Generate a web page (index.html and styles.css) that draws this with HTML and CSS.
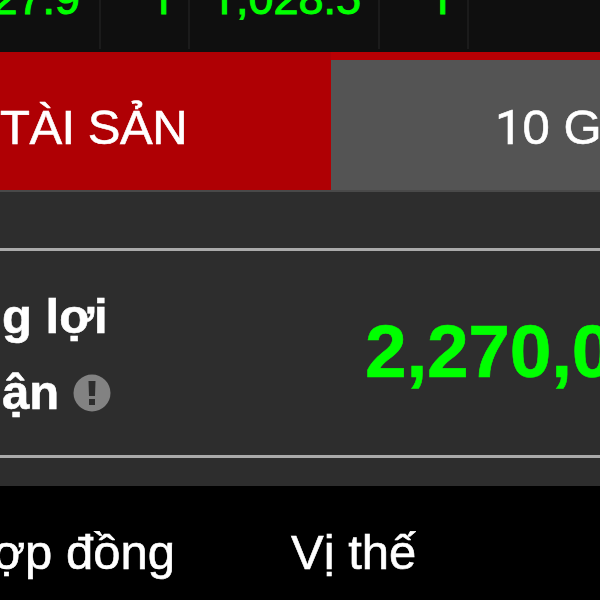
FILE: index.html
```html
<!DOCTYPE html>
<html lang="vi">
<head>
  <meta charset="UTF-8">
  <meta name="viewport" content="width=device-width, initial-scale=1.0">
  <title>Tài sản</title>
  <link rel="stylesheet" href="styles.css">
</head>
<body>
  <div class="prices">
    <div class="cell price-first"><span>27.9</span></div>
    <div class="cell volume"><span class="one">1</span></div>
    <div class="cell price"><span><span class="one">1</span>,028.5</span></div>
    <div class="cell volume"><span class="one">1</span></div>
  </div>

  <nav class="tabs">
    <button class="tab active">TÀI SẢN</button>
    <button class="tab"><span class="one">1</span>0 G</button>
  </nav>

  <section class="summary">
    <div class="profit">
      <div class="profit-label">
        <div>g lợi</div>
        <div class="label-row">ận
          <svg class="info" viewBox="0 0 38 38">
            <circle cx="19" cy="19" r="18.5" fill="#828282"/>
            <path d="M15.5 7h7l-.5 15h-6z M16 25h6v6h-6z" fill="#2d2d2d"/>
          </svg>
        </div>
      </div>
      <div class="profit-value">2,270,0</div>
    </div>
  </section>

  <div class="table-head">
    <div class="contract"><span>ợp đồng</span></div>
    <div class="position">Vị thế</div>
  </div>
</body>
</html>
```

FILE: styles.css
```css
body {
  font-family: "Liberation Sans", Arial, sans-serif;
  margin: 0;
  height: 600px;
  display: flex;
  flex-direction: column;
  overflow: hidden;
  background-color: #000;
  color: #fff;
  font-size: 49px;
  -webkit-text-stroke: 0.6px currentColor;
}

/* digit 1 without the foot */
.one {
  font-family: Roboto, sans-serif;
}

.prices {
  display: flex;
  flex: none;
  height: 52px;
  background-color: #0f0f0f;
  color: #00ff00;
  font-size: 45px;
  overflow: hidden;
  -webkit-text-stroke: 1px currentColor;
}

.cell {
  display: flex;
  flex: none;
  justify-content: flex-end;
  align-items: baseline;
  box-sizing: border-box;
  height: 75px;
  margin-top: -26px;
  border-right: 2px solid #1b1b1b;
  padding-right: 17px;
  line-height: 50px;
}

.price-first {
  width: 101px;
  padding-right: 19px;
}

.volume {
  width: 89px;
  padding-right: 13px;
}

.price {
  width: 190px;
}

.tabs {
  display: flex;
  flex: none;
  height: 138px;
  box-sizing: border-box;
  border-top: 8px solid #b80004;
}

.tab {
  flex: 1;
  border: none;
  padding: 5px 0 0 164px;
  background-color: #545454;
  color: #fff;
  font: inherit;
  line-height: 125px;
  text-align: left;
  white-space: nowrap;
  overflow: hidden;
  -webkit-text-stroke: 0.6px currentColor;
}

.tab.active {
  flex: none;
  width: 331px;
  margin-top: -8px;
  padding: 13px 0 0;
  background-color: #af0004;
  letter-spacing: -0.5px;
}

.summary {
  flex: none;
  height: 296px;
  box-sizing: border-box;
  border-top: 2px solid #494949;
  padding: 56px 0 28px;
  background-color: #2d2d2d;
}

.profit {
  display: flex;
  align-items: center;
  height: 204px;
  border-top: 3px solid #aaa;
  border-bottom: 3px solid #aaa;
  font-weight: bold;
}

.profit-label {
  flex: none;
  box-sizing: border-box;
  width: 365px;
  padding: 2px 0 0 2px;
  line-height: 76px;
}

.label-row {
  display: flex;
  align-items: center;
  gap: 14px;
}

.info {
  width: 38px;
  height: 38px;
  margin-top: 2px;
}

.profit-value {
  padding-bottom: 4px;
  color: #00ff00;
  font-size: 75px;
  letter-spacing: -0.3px;
}

.table-head {
  display: flex;
  flex: 1;
  align-items: center;
  padding-top: 18px;
}

.contract {
  display: flex;
  justify-content: flex-end;
  width: 175px;
  margin-right: 116px;
  white-space: nowrap;
}

.position {
  white-space: nowrap;
}
```
